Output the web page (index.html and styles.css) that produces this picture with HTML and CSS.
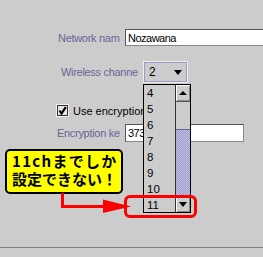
FILE: index.html
```html
<!DOCTYPE html>
<html>
<head>
<meta charset="utf-8">
<link rel="stylesheet" href="styles.css">
</head>
<body>
<div class="screen">
  <div class="form">
    <div class="row row-name">
      <span class="label label-name">Network nam</span>
      <div class="field field-name">Nozawana</div>
    </div>
    <div class="row row-channel">
      <span class="label label-channel">Wireless channe</span>
      <div class="combo"><span class="combo-value">2</span><span class="tri tri-down"></span></div>
    </div>
    <div class="row row-check">
      <span class="checkbox">
        <svg width="13" height="13" viewBox="0 0 13 13">
          <rect x="0.5" y="0.5" width="12" height="12" fill="none" stroke="#f2f2f2"/>
          <rect x="1.5" y="1.5" width="10" height="10" fill="#e6e6e6" stroke="#333"/>
          <path d="M3.5 6.5 L5.5 9.5 L9.8 3.2" fill="none" stroke="#000" stroke-width="2.2"/>
        </svg>
      </span>
      <span class="check-label">Use encryption</span>
    </div>
    <div class="row row-key">
      <span class="label label-key">Encryption ke</span>
      <div class="field field-key">3737</div>
    </div>
  </div>
  <div class="divider"></div>

  <div class="listbox">
    <div class="items">
      <div class="item">4</div>
      <div class="item">5</div>
      <div class="item">6</div>
      <div class="item">7</div>
      <div class="item">8</div>
      <div class="item">9</div>
      <div class="item">10</div>
      <div class="item">11</div>
    </div>
    <div class="scrollbar">
      <div class="sb-btn sb-up"><span class="tri tri-up"></span></div>
      <div class="sb-track"></div>
      <div class="sb-thumb"></div>
      <div class="sb-btn sb-down"><span class="tri tri-down"></span></div>
    </div>
  </div>

  <div class="highlight"></div>

  <div class="callout">
    <span class="callout-line line-1">11chまでしか</span>
    <span class="callout-line line-2">設定できない！</span>
  </div>

  <svg class="arrow" width="263" height="257" viewBox="0 0 263 257">
    <path d="M62.5 193 V206.5 H108" fill="none" stroke="#ff0000" stroke-width="3"/>
    <polygon points="103,199.5 131,206.5 103,213" fill="#ff0000"/>
  </svg>
</div>
</body>
</html>
```

FILE: styles.css
```css
html, body {
  margin: 0;
  padding: 0;
  background: #cccccc;
}

.screen {
  position: relative;
  width: 263px;
  height: 257px;
  overflow: hidden;
  background: #cccccc;
  font-family: "Liberation Sans", Arial, sans-serif;
  font-size: 11px;
  color: #000;
}

.form {
  display: flex;
  flex-direction: column;
  padding-top: 29px;
}

.row {
  display: flex;
  align-items: center;
}

.row-name { height: 17px; }
.row-channel { height: 22px; margin-top: 15px; }
.row-check { height: 13px; margin-top: 21px; }
.row-key { height: 18px; margin-top: 7px; }

.label {
  flex: none;
  color: #666699;
  white-space: nowrap;
  overflow: hidden;
  letter-spacing: -0.3px;
}

.label-name { margin-left: 58px; width: 67px; }
.label-channel { margin-left: 61px; width: 82px; }
.label-key { margin-left: 57px; width: 68px; }

.field {
  flex: none;
  box-sizing: border-box;
  height: 100%;
  background: #ffffff;
  border: 1px solid #555555;
  border-right-color: #888888;
  border-bottom-color: #888888;
  padding-left: 2px;
  display: flex;
  align-items: center;
  white-space: nowrap;
  overflow: hidden;
  letter-spacing: -0.5px;
  font-size: 11px;
}

.field-name { width: 150px; }
.field-key { width: 119px; }

.combo {
  flex: none;
  box-sizing: border-box;
  width: 45px;
  height: 22px;
  border: 1px solid #eeeeee;
  box-shadow: inset 0 0 0 1px #9999cc;
  display: flex;
  align-items: center;
  padding-left: 5px;
  padding-right: 5px;
}

.combo-value {
  font-size: 12px;
}

.combo .tri-down {
  margin-left: auto;
}

.tri {
  display: block;
  width: 0;
  height: 0;
  border-left: 4px solid transparent;
  border-right: 4px solid transparent;
}

.tri-down { border-top: 5px solid #000; }
.tri-up { border-bottom: 4px solid #000; }

.checkbox {
  flex: none;
  margin-left: 56px;
  width: 13px;
  height: 13px;
  display: block;
}

.checkbox svg { display: block; }

.check-label {
  flex: none;
  margin-left: 4px;
  white-space: nowrap;
}

.divider {
  margin-top: 105px;
  height: 1px;
  background: #7f7f7f;
}

/* popup list */
.listbox {
  position: absolute;
  left: 143px;
  top: 84px;
  width: 48px;
  height: 129px;
  box-sizing: border-box;
  border: 1px solid #000;
  background: #cccccc;
  display: flex;
}

.items {
  flex: 1;
  display: flex;
  flex-direction: column;
  overflow: hidden;
}

.item {
  height: 16px;
  line-height: 16px;
  padding-left: 3px;
  font-size: 11.5px;
  flex: none;
}

.scrollbar {
  width: 15px;
  box-sizing: border-box;
  border-left: 1px solid #333;
  display: flex;
  flex-direction: column;
}

.sb-btn {
  height: 16px;
  flex: none;
  display: flex;
  align-items: center;
  justify-content: center;
  background: #cccccc;
  box-shadow: inset 1px 1px 0 #ffffff, inset -1px -1px 0 #888888;
}

.sb-up { border-bottom: 1px solid #555; }

.sb-track {
  height: 27px;
  flex: none;
  background: #cccccc;
}

.sb-thumb {
  height: 67px;
  flex: none;
  box-sizing: border-box;
  border-top: 1px solid #666699;
  background-color: #9999cc;
  background-image: repeating-conic-gradient(#9999cc 0 25%, #c4c4ea 0 50%);
  background-size: 2px 2px;
}

.highlight {
  position: absolute;
  left: 124px;
  top: 195px;
  width: 73px;
  height: 23px;
  box-sizing: border-box;
  border: 3px solid #ff0000;
  border-radius: 6px;
}

.callout {
  position: absolute;
  left: 5px;
  top: 149px;
  width: 118px;
  height: 45px;
  box-sizing: border-box;
  background: #ffff00;
  border: 2px solid #000;
  border-radius: 5px;
  padding: 1px 2px 0 5px;
  font-family: "Noto Sans CJK JP", "Noto Sans", sans-serif;
  font-weight: 700;
  font-size: 15px;
  line-height: 18px;
  display: flex;
  flex-direction: column;
}

.callout-line {
  display: block;
  white-space: nowrap;
}

.line-1 { letter-spacing: 1.3px; }
.line-2 { letter-spacing: 0; }

.arrow {
  position: absolute;
  left: 0;
  top: 0;
}
```
